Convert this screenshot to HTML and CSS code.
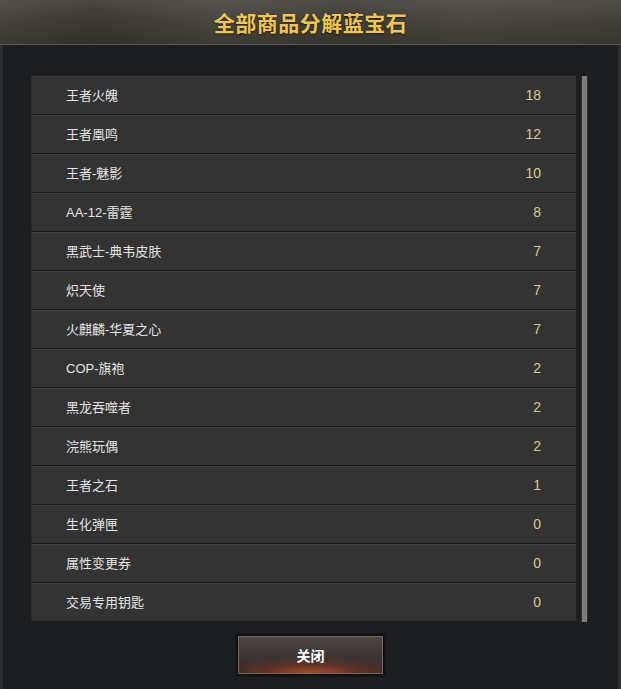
FILE: index.html
```html
<!DOCTYPE html>
<html lang="zh-CN">
<head>
  <meta charset="UTF-8" />
  <meta name="viewport" content="width=device-width, initial-scale=1" />
  <title>全部商品分解蓝宝石</title>
  <link rel="stylesheet" href="styles.css">
</head>
<body>

  <div class="panel">
    <div class="panel-head">
      <h1 class="title">全部商品分解蓝宝石</h1>
    </div>

    <div class="panel-body">
      <div class="list-wrap">
        <ul class="item-list">
          <li class="item"><span class="item-name">王者火魄</span><span class="item-num">18</span></li>
          <li class="item"><span class="item-name">王者凰鸣</span><span class="item-num">12</span></li>
          <li class="item"><span class="item-name">王者-魅影</span><span class="item-num">10</span></li>
          <li class="item"><span class="item-name">AA-12-雷霆</span><span class="item-num">8</span></li>
          <li class="item"><span class="item-name">黑武士-典韦皮肤</span><span class="item-num">7</span></li>
          <li class="item"><span class="item-name">炽天使</span><span class="item-num">7</span></li>
          <li class="item"><span class="item-name">火麒麟-华夏之心</span><span class="item-num">7</span></li>
          <li class="item"><span class="item-name">COP-旗袍</span><span class="item-num">2</span></li>
          <li class="item"><span class="item-name">黑龙吞噬者</span><span class="item-num">2</span></li>
          <li class="item"><span class="item-name">浣熊玩偶</span><span class="item-num">2</span></li>
          <li class="item"><span class="item-name">王者之石</span><span class="item-num">1</span></li>
          <li class="item"><span class="item-name">生化弹匣</span><span class="item-num">0</span></li>
          <li class="item"><span class="item-name">属性变更券</span><span class="item-num">0</span></li>
          <li class="item"><span class="item-name">交易专用钥匙</span><span class="item-num">0</span></li>
        </ul>
        <div class="scrollbar"><div class="scroll-thumb"></div></div>
      </div>

      <div class="actions">
        <button class="btn-close">关闭</button>
      </div>
    </div>
  </div>

</body>
</html>
```

FILE: styles.css
```css
/* Baseline */
* {
  margin: 0;
  padding: 0;
  box-sizing: border-box;
}
body {
  background: #1d1e20;
  font-family: "Liberation Sans", "Noto Sans CJK SC", sans-serif;
  color: #e2e2e2;
}

/* Panel frame */
.panel {
  width: 621px;
  height: 689px;
  display: flex;
  flex-direction: column;
  border-left: 3px solid #2c2d2f;
  border-right: 3px solid #2c2d2f;
}

/* Header - brownish textured band */
.panel-head {
  height: 45px;
  margin: 0 -3px;
  display: flex;
  justify-content: center;
  align-items: center;
  background:
    linear-gradient(180deg, rgba(255,255,255,0.07) 0%, rgba(0,0,0,0) 40%, rgba(0,0,0,0.18) 100%),
    linear-gradient(90deg, #48453e 0%, #3c3a34 15%, #4a4842 35%, #413f39 55%, #4b4842 75%, #43413b 100%);
  border-bottom: 1px solid #5a5750;
}
.title {
  font-family: "Noto Sans CJK SC", sans-serif;
  font-size: 21px;
  font-weight: bold;
  color: #f0c64e;
  letter-spacing: 0.5px;
  text-shadow: 0 1px 2px rgba(0,0,0,0.6);
}

/* Body */
.panel-body {
  flex: 1;
  padding: 31px 0 0 28px;
}
.list-wrap {
  display: flex;
  gap: 5px;
}

/* Rows */
.item-list {
  list-style: none;
  width: 545px;
  background: #1c1c1c;
}
.item {
  height: 39px;
  display: flex;
  align-items: center;
  justify-content: space-between;
  padding: 0 35px 2px 34px;
  background: #333333;
  border-top: 1px solid #414141;
  border-bottom: 1px solid #1a1a1a;
  border-left: 1px solid #2a2a2a;
  font-size: 13px;
}
.item-name {
  color: #e4e4e4;
}
.item-num {
  color: #d9c98c;
  font-size: 14px;
}

/* Scrollbar */
.scrollbar {
  width: 7px;
  background: #2c2c2c;
  padding: 0 1px;
}
.scroll-thumb {
  height: 100%;
  background: #7c7c7c;
}

/* Close button */
.actions {
  display: flex;
  justify-content: center;
  padding-top: 13px;
  padding-right: 28px;
}
.btn-close {
  width: 147px;
  height: 40px;
  font-family: "Noto Sans CJK SC", sans-serif;
  font-size: 14px;
  font-weight: bold;
  color: #ffffff;
  border: 1px solid #0c0c0c;
  outline: 1px solid #6e6a66;
  outline-offset: -2px;
  background:
    radial-gradient(ellipse 60% 45% at 50% 100%, rgba(220,90,40,0.75) 0%, rgba(160,60,30,0.35) 55%, rgba(0,0,0,0) 100%),
    linear-gradient(180deg, #4c4846 0%, #3c3432 55%, #3c2a24 100%);
  box-shadow: 0 0 0 2px #151515;
  cursor: pointer;
}
```
